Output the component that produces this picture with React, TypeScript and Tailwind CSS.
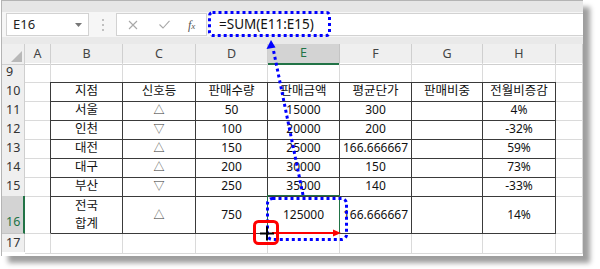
import React from "react";

const FONT = "font-['Noto_Sans','Noto_Sans_CJK_KR',sans-serif]";

const colLetters = ["A", "B", "C", "D", "E", "F", "G", "H", ""];

type Row = { n: number; h: string; cells: string[] };

const rows: Row[] = [
  { n: 9, h: "h-[19px]", cells: ["", "", "", "", "", "", "", "", ""] },
  { n: 10, h: "h-[19px]", cells: ["", "지점", "신호등", "판매수량", "판매금액", "평균단가", "판매비중", "전월비증감", ""] },
  { n: 11, h: "h-[19px]", cells: ["", "서울", "△", "50", "15000", "300", "", "4%", ""] },
  { n: 12, h: "h-[19px]", cells: ["", "인천", "▽", "100", "20000", "200", "", "-32%", ""] },
  { n: 13, h: "h-[19px]", cells: ["", "대전", "△", "150", "25000", "166.666667", "", "59%", ""] },
  { n: 14, h: "h-[19px]", cells: ["", "대구", "△", "200", "30000", "150", "", "73%", ""] },
  { n: 15, h: "h-[19px]", cells: ["", "부산", "▽", "250", "35000", "140", "", "-33%", ""] },
  { n: 16, h: "h-[38px]", cells: ["", "전국\n합계", "△", "750", "125000", "166.666667", "", "14%", ""] },
  { n: 17, h: "h-[18px]", cells: ["", "", "", "", "", "", "", "", ""] },
];

const GRID = "grid grid-cols-[23px_26px_72px_73px_72px_72px_72px_71px_73px_27px]";

function Cell({ r, c, v }: { r: number; c: number; v: string }) {
  const inTable = r >= 10 && r <= 16 && c >= 1 && c <= 7;
  const darkRight = inTable || (c === 0 && r >= 10 && r <= 16);
  const darkBottom = inTable || (r === 9 && c >= 1 && c <= 7);
  const selected = r === 16 && c === 4;
  let content: React.ReactNode;
  if (v === "△" || v === "▽") {
    content = <span className="text-[11px] text-[#333]">{v}</span>;
  } else if (/[가-힣]/.test(v)) {
    content = <span className="text-[12.5px] leading-[18px]">{v}</span>;
  } else {
    content = <span className="text-[12px]">{v}</span>;
  }
  return (
    <div
      className={
        "relative flex items-center justify-center border-r border-b text-[#111] leading-[18px] whitespace-pre text-center " +
        (darkRight ? "border-r-[#3a3a3a] " : "border-r-[#dadada] ") +
        (darkBottom ? "border-b-[#3a3a3a]" : "border-b-[#dadada]")
      }
    >
      {content}
      {selected && (
        <div className="absolute left-[-1px] top-[-1px] right-[-1px] bottom-[-1px] border-[1.5px] border-[#217346]" />
      )}
    </div>
  );
}

export default function App() {
  return (
    <div className={"relative w-[600px] h-[269px] bg-white overflow-hidden " + FONT}>
      <div className="ml-[1px] w-[582px] h-[256px] flex flex-col bg-white border-l border-t border-[#b4b4b4] shadow-[7px_7px_5px_rgba(0,0,0,0.38)]">
        {/* top band */}
        <div className="h-[11px] bg-[#e6e6e6]" />
        {/* formula row */}
        <div className="h-[25px] bg-[#f6f6f6] flex items-center">
          <div className="ml-[4px] w-[83px] h-[23px] bg-white border border-[#d2d2d2] flex items-center justify-between pl-[6px] pr-[6px]">
            <span className="text-[13px] text-[#222]">E16</span>
            <svg width="7" height="4" viewBox="0 0 7 4"><path d="M0 0 L7 0 L3.5 4 Z" fill="#777" /></svg>
          </div>
          <div className="w-[27px] flex flex-col items-center gap-[3px]">
            <div className="w-[2px] h-[2px] bg-[#c0c0c0]" />
            <div className="w-[2px] h-[2px] bg-[#c0c0c0]" />
            <div className="w-[2px] h-[2px] bg-[#c0c0c0]" />
          </div>
          <div className="w-[91px] h-[23px] bg-white border border-[#d2d2d2] flex items-center">
            <svg className="ml-[11px]" width="10" height="10" viewBox="0 0 10 10"><path d="M1 1 L9 9 M9 1 L1 9" stroke="#a8a8a8" strokeWidth="1.1" /></svg>
            <svg className="ml-[21px]" width="11" height="9" viewBox="0 0 11 9"><path d="M0.5 4.5 L4 8 L10.5 0.8" stroke="#a8a8a8" strokeWidth="1.1" fill="none" /></svg>
            <span className="ml-[18px] text-[12px] italic text-[#555] font-['Liberation_Serif',serif]">f<span className="text-[9px]">x</span></span>
          </div>
          <div className="ml-[3px] flex-1 h-[23px] bg-white border-t border-b border-[#d2d2d2] flex items-center pl-[9px]">
            <span className="text-[13.5px] text-[#111]">=SUM(E11:E15)</span>
          </div>
        </div>
        <div className="h-[7px] bg-[#e9e9e9]" />
        {/* column header */}
        <div className={GRID + " h-[19px] bg-[#efefef]"}>
          <div className="relative border-r border-b border-[#cfcfcf]">
            <svg className="absolute right-[2px] bottom-[2px]" width="11" height="11" viewBox="0 0 11 11"><path d="M11 0 L11 11 L0 11 Z" fill="#b8b8b8" /></svg>
          </div>
          {colLetters.map((l, i) =>
            l === "E" ? (
              <div key={i} className="flex items-center justify-center bg-[#d3d3d3] border-r border-r-[#c4c4c4] border-b-2 border-b-[#217346] text-[12.5px] text-[#217346]">
                {l}
              </div>
            ) : (
              <div key={i} className="flex items-center justify-center border-r border-b border-[#cfcfcf] text-[12.5px] text-[#444]">
                {l}
              </div>
            )
          )}
        </div>
        {/* rows */}
        {rows.map((row) => (
          <div key={row.n} className={GRID + " " + row.h}>
            {row.n === 16 ? (
              <div className="flex items-end pl-[4px] pb-[1px] bg-[#d3d3d3] border-r-2 border-r-[#217346] border-b border-b-[#c4c4c4] text-[12.5px] text-[#217346]">
                {row.n}
              </div>
            ) : (
              <div className="flex items-center pl-[4px] bg-[#efefef] border-r border-b border-[#cfcfcf] text-[12.5px] text-[#333]">
                {row.n}
              </div>
            )}
            {row.cells.map((v, c) => (
              <Cell key={c} r={row.n} c={c} v={v} />
            ))}
          </div>
        ))}
        <div className="flex-1 bg-white" />
      </div>

      {/* annotation overlay */}
      <svg className="absolute left-0 top-0 pointer-events-none" width="600" height="269" viewBox="0 0 600 269">
        <rect x="209.5" y="12.5" width="120" height="23" rx="3" fill="none" stroke="#0000ff" strokeWidth="3" strokeDasharray="3 3" />
        <line x1="303" y1="195" x2="273" y2="48" stroke="#0000ff" strokeWidth="3" strokeDasharray="3 3" />
        <path d="M271 40 L266.5 49 L275.5 47.5 Z" fill="#0000ff" />
        <rect x="267.5" y="198.5" width="79" height="41" rx="5" fill="none" stroke="#0000ff" strokeWidth="3" strokeDasharray="3 3" />
        <line x1="272" y1="233" x2="334" y2="233" stroke="#ff0000" strokeWidth="2" />
        <path d="M341 233 L333 229.5 L333 236.5 Z" fill="#ff0000" />
        <rect x="254.5" y="221.5" width="23" height="22" rx="4" fill="none" stroke="#ff0000" strokeWidth="3" />
        <path d="M260 233.5 L274 233.5 M267 226.5 L267 240.5" stroke="#000" strokeWidth="2" />
      </svg>
    </div>
  );
}
